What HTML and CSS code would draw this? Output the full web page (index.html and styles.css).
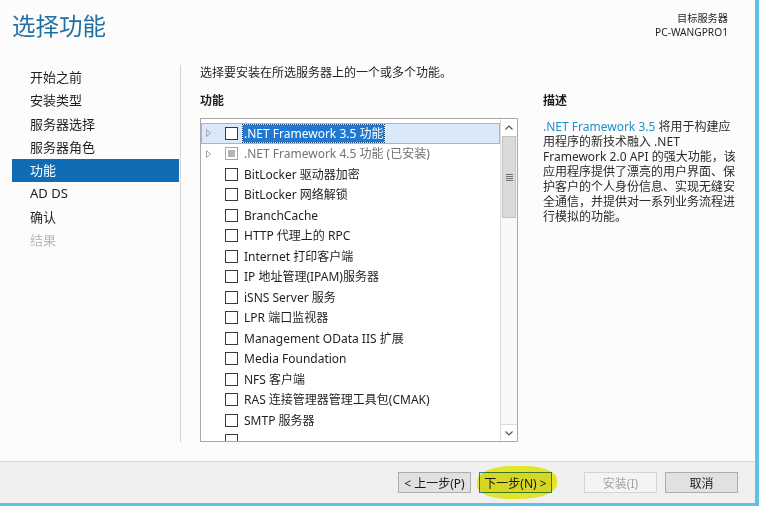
FILE: index.html
```html
<!DOCTYPE html>
<html lang="zh-CN">
<head>
<meta charset="utf-8">
<title>添加角色和功能向导 - 选择功能</title>
<link rel="stylesheet" href="styles.css">
</head>
<body>
<div class="window">
  <header class="header">
    <h1 class="title">选择功能</h1>
    <div class="target">
      <div>目标服务器</div>
      <div>PC-WANGPRO1</div>
    </div>
  </header>

  <div class="main">
    <nav class="nav">
      <div class="nav-item">开始之前</div>
      <div class="nav-item">安装类型</div>
      <div class="nav-item">服务器选择</div>
      <div class="nav-item">服务器角色</div>
      <div class="nav-item active">功能</div>
      <div class="nav-item">AD DS</div>
      <div class="nav-item">确认</div>
      <div class="nav-item disabled">结果</div>
    </nav>

    <section class="content">
      <p class="intro">选择要安装在所选服务器上的一个或多个功能。</p>
      <div class="columns">
        <div class="features">
          <h2 class="heading">功能</h2>
          <div class="listbox">
            <div class="list">
              <div class="row selected">
                <svg class="tri" width="5" height="8" viewBox="0 0 5 8"><polygon points="0.5,0.5 4.5,4 0.5,7.5" fill="none" stroke="#a3a3a3" stroke-width="1"/></svg>
                <span class="cb"></span>
                <span class="label-sel">.NET Framework 3.5 功能</span>
              </div>
              <div class="row installed">
                <svg class="tri" width="5" height="8" viewBox="0 0 5 8"><polygon points="0.5,0.5 4.5,4 0.5,7.5" fill="none" stroke="#a3a3a3" stroke-width="1"/></svg>
                <span class="cb cb-ind"></span>
                <span class="label">.NET Framework 4.5 功能 (已安装)</span>
              </div>
              <div class="row"><span class="tri-space"></span><span class="cb"></span><span class="label">BitLocker 驱动器加密</span></div>
              <div class="row"><span class="tri-space"></span><span class="cb"></span><span class="label">BitLocker 网络解锁</span></div>
              <div class="row"><span class="tri-space"></span><span class="cb"></span><span class="label">BranchCache</span></div>
              <div class="row"><span class="tri-space"></span><span class="cb"></span><span class="label">HTTP 代理上的 RPC</span></div>
              <div class="row"><span class="tri-space"></span><span class="cb"></span><span class="label">Internet 打印客户端</span></div>
              <div class="row"><span class="tri-space"></span><span class="cb"></span><span class="label">IP 地址管理(IPAM)服务器</span></div>
              <div class="row"><span class="tri-space"></span><span class="cb"></span><span class="label">iSNS Server 服务</span></div>
              <div class="row"><span class="tri-space"></span><span class="cb"></span><span class="label">LPR 端口监视器</span></div>
              <div class="row"><span class="tri-space"></span><span class="cb"></span><span class="label">Management OData IIS 扩展</span></div>
              <div class="row"><span class="tri-space"></span><span class="cb"></span><span class="label">Media Foundation</span></div>
              <div class="row"><span class="tri-space"></span><span class="cb"></span><span class="label">NFS 客户端</span></div>
              <div class="row"><span class="tri-space"></span><span class="cb"></span><span class="label">RAS 连接管理器管理工具包(CMAK)</span></div>
              <div class="row"><span class="tri-space"></span><span class="cb"></span><span class="label">SMTP 服务器</span></div>
              <div class="row"><span class="tri-space"></span><span class="cb"></span></div>
            </div>
            <div class="scrollbar">
              <div class="sb-btn">
                <svg width="8" height="5" viewBox="0 0 8 5"><polyline points="0.5,4.5 4,1 7.5,4.5" fill="none" stroke="#555" stroke-width="1.2"/></svg>
              </div>
              <div class="sb-track">
                <div class="sb-thumb">
                  <span class="grip"></span><span class="grip"></span><span class="grip"></span><span class="grip"></span>
                </div>
              </div>
              <div class="sb-btn sb-btn-down">
                <svg width="8" height="5" viewBox="0 0 8 5"><polyline points="0.5,0.5 4,4 7.5,0.5" fill="none" stroke="#555" stroke-width="1.2"/></svg>
              </div>
            </div>
          </div>
        </div>

        <aside class="desc">
          <h2 class="heading">描述</h2>
          <p class="desc-text"><span class="link">.NET Framework 3.5</span> 将用于构建应<br>用程序的新技术融入 .NET<br>Framework 2.0 API 的强大功能，该<br>应用程序提供了漂亮的用户界面、保<br>护客户的个人身份信息、实现无缝安<br>全通信，并提供对一系列业务流程进<br>行模拟的功能。</p>
        </aside>
      </div>
    </section>
  </div>

  <footer class="footer">
    <button class="btn">&lt; 上一步(P)</button>
    <button class="btn btn-default">下一步(N) &gt;</button>
    <button class="btn btn-disabled btn-gap">安装(I)</button>
    <button class="btn">取消</button>
    <div class="marker"></div>
  </footer>
</div>
</body>
</html>
```
FILE: styles.css
```css
* { box-sizing: border-box; }

html, body {
  margin: 0;
  padding: 0;
}

body {
  width: 759px;
  height: 506px;
  overflow: hidden;
  background: #5cc4e2;
  font-family: "Noto Sans", "Noto Sans CJK SC", sans-serif;
  font-size: 12px;
  color: #1e1e1e;
}

.window {
  width: 755px;
  height: 503px;
  background: #fcfcfc;
  display: flex;
  flex-direction: column;
}

/* header */
.header {
  height: 65px;
  display: flex;
  justify-content: space-between;
  align-items: flex-start;
  padding: 9px 27px 0 12px;
}

.title {
  margin: 0;
  font-family: "Noto Sans CJK SC", sans-serif;
  font-weight: 400;
  font-size: 23.5px;
  line-height: 32px;
  color: #1f6fa3;
}

.target {
  text-align: right;
  font-size: 10.2px;
  line-height: 13.5px;
  padding-top: 3px;
  color: #1e1e1e;
}

/* main */
.main {
  flex: 1;
  display: flex;
  padding-bottom: 19px;
}

.nav {
  width: 181px;
  border-right: 1px solid #d3d3d3;
  padding-top: 1px;
}

.nav-item {
  height: 23.3px;
  line-height: 23.3px;
  margin-left: 12px;
  margin-right: 1px;
  padding-left: 18px;
  font-size: 13px;
  color: #1e1e1e;
}

.nav-item.active {
  background: #106db5;
  color: #ffffff;
}

.nav-item.disabled {
  color: #b9b9b9;
}

.content {
  flex: 1;
  padding-left: 19px;
}

.intro {
  margin: 0;
  line-height: 16px;
}

.columns {
  display: flex;
  margin-top: 12px;
  gap: 25px;
}

.heading {
  margin: 0;
  font-size: 12px;
  font-weight: 700;
  line-height: 16px;
}

.features {
  width: 318px;
}

.listbox {
  margin-top: 9px;
  height: 324px;
  border: 1px solid #a9a9a9;
  background: #ffffff;
  display: flex;
  overflow: hidden;
}

.list {
  flex: 1;
  padding-top: 4px;
  overflow: hidden;
}

.row {
  height: 20.5px;
  display: flex;
  align-items: center;
  padding-left: 4px;
  border: 1px solid transparent;
  white-space: nowrap;
}

.row.selected {
  background: #d9e9f9;
  border-color: #8fbde9;
}

.tri, .tri-space {
  width: 5px;
  height: 8px;
  flex: none;
  margin-right: 14px;
}

.cb {
  width: 13px;
  height: 13px;
  flex: none;
  border: 1px solid #3a3a3a;
  background: #fff;
  display: flex;
  align-items: center;
  justify-content: center;
}

.cb-ind {
  border-color: #a6a6a6;
}

.cb-ind::after {
  content: "";
  width: 7px;
  height: 7px;
  background: #b4b4b4;
}

.label {
  margin-left: 6px;
  line-height: 17px;
}

.label-sel {
  display: block;
  height: 17px;
  line-height: 17px;
  margin-left: 5px;
  padding: 0 1px;
  background: #1f78d4;
  color: #ffffff;
  outline: 1px dotted #163f6e;
}

.installed .label {
  color: #727272;
}

/* scrollbar */
.scrollbar {
  width: 17px;
  flex: none;
  border-left: 1px solid #dcdcdc;
  background: #f8f8f8;
  display: flex;
  flex-direction: column;
}

.sb-btn {
  height: 17px;
  flex: none;
  display: flex;
  align-items: center;
  justify-content: center;
  background: #ffffff;
}

.sb-btn-down {
  border-top: 1px solid #dcdcdc;
}

.sb-track {
  flex: 1;
  padding: 0 1px;
}

.sb-thumb {
  height: 82px;
  background: #dadada;
  border: 1px solid #c2c2c2;
  display: flex;
  flex-direction: column;
  align-items: center;
  justify-content: center;
  gap: 1px;
}

.grip {
  width: 7px;
  height: 1px;
  background: #6e6e6e;
}

/* description */
.desc {
  width: 200px;
}

.desc-text {
  margin: 10px 0 0;
  line-height: 15px;
  font-size: 12px;
  color: #2a2a2a;
}

.link {
  color: #2290c9;
}

/* footer */
.footer {
  position: relative;
  height: 42px;
  flex: none;
  background: #f0f0f0;
  border-top: 1px solid #d9d9d9;
  display: flex;
  justify-content: flex-end;
  align-items: flex-start;
  padding: 10px 17px 0 0;
  gap: 8px;
}

.btn {
  width: 73px;
  height: 21px;
  padding: 0;
  font-family: "Noto Sans", "Noto Sans CJK SC", sans-serif;
  font-size: 12px;
  color: #1a1a1a;
  background: #e1e1e1;
  border: 1px solid #adadad;
}

.btn-default {
  border-color: #3c7fb1;
}

.btn-disabled {
  background: #f4f4f4;
  border-color: #d5d5d5;
  color: #a3a3a3;
}

.btn-gap {
  margin-left: 24px;
}

.marker {
  position: absolute;
  left: 477px;
  top: 4px;
  width: 80px;
  height: 33px;
  border-radius: 45% 40% 45% 40%;
  background: #f2f21a;
  mix-blend-mode: multiply;
  opacity: 0.92;
}
```
